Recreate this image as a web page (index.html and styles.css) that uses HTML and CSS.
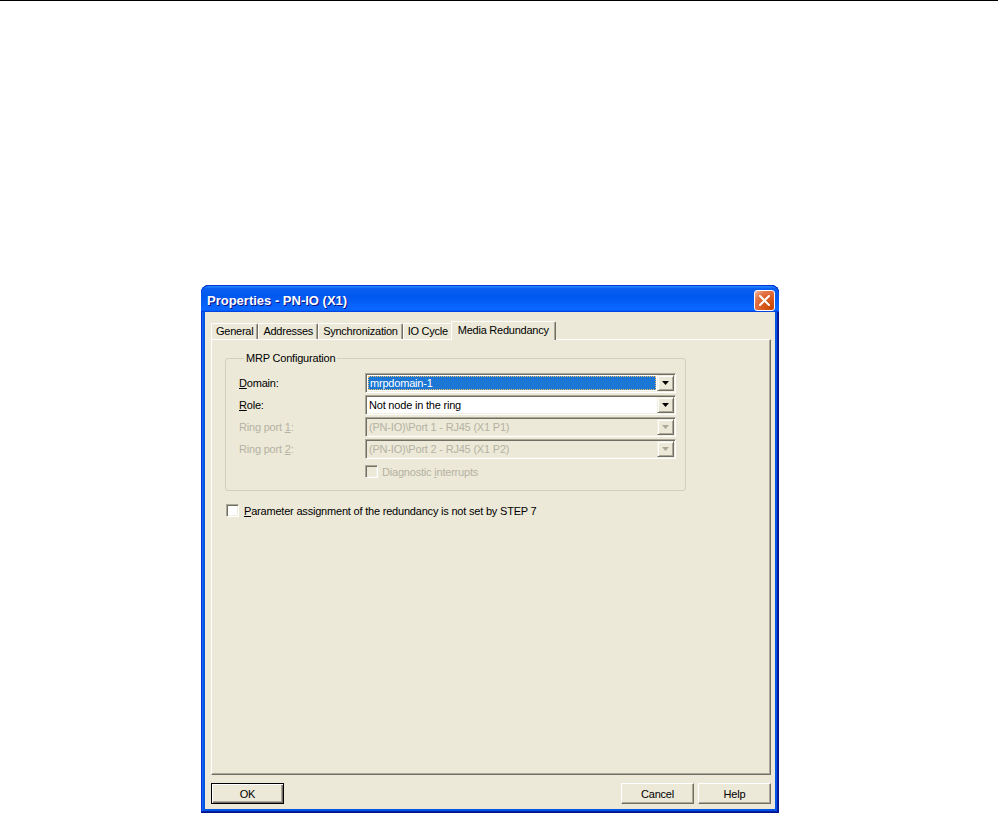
FILE: index.html
```html
<!DOCTYPE html>
<html>
<head>
<meta charset="utf-8">
<title>Properties - PN-IO (X1)</title>
<link rel="stylesheet" href="styles.css">
</head>
<body>
<div class="topline"></div>
<div class="window">
  <div class="titlebar">
    <span class="title">Properties - PN-IO (X1)</span>
    <span class="close"><svg width="11" height="11" viewBox="0 0 11 11"><path d="M1 1L10 10M10 1L1 10" stroke="#fff" stroke-width="2" stroke-linecap="square" fill="none"/></svg></span>
  </div>
  <div class="client">
    <div class="tabs">
      <div class="tab">General</div>
      <div class="tab">Addresses</div>
      <div class="tab">Synchronization</div>
      <div class="tab">IO Cycle</div>
      <div class="tab active">Media Redundancy</div>
    </div>
    <div class="pane">
      <fieldset class="group">
        <legend>MRP Configuration</legend>
        <div class="row">
          <span class="label"><u>D</u>omain:</span>
          <div class="combo">
            <span class="value selected"><span class="focusrect">mrpdomain-1</span></span>
            <span class="drop"><svg width="7" height="4" viewBox="0 0 7 4"><path d="M0 0H7L3.5 4Z" fill="#000"/></svg></span>
          </div>
        </div>
        <div class="row">
          <span class="label"><u>R</u>ole:</span>
          <div class="combo">
            <span class="value">Not node in the ring</span>
            <span class="drop"><svg width="7" height="4" viewBox="0 0 7 4"><path d="M0 0H7L3.5 4Z" fill="#000"/></svg></span>
          </div>
        </div>
        <div class="row">
          <span class="label disabled">Ring port <u>1</u>:</span>
          <div class="combo off">
            <span class="value">(PN-IO)\Port 1 - RJ45 (X1 P1)</span>
            <span class="drop"><svg width="7" height="4" viewBox="0 0 7 4"><path d="M0 0H7L3.5 4Z" fill="#ACA899"/></svg></span>
          </div>
        </div>
        <div class="row">
          <span class="label disabled">Ring port <u>2</u>:</span>
          <div class="combo off">
            <span class="value">(PN-IO)\Port 2 - RJ45 (X1 P2)</span>
            <span class="drop"><svg width="7" height="4" viewBox="0 0 7 4"><path d="M0 0H7L3.5 4Z" fill="#ACA899"/></svg></span>
          </div>
        </div>
        <div class="row checkrow">
          <span class="label"></span>
          <span class="cb off"></span>
          <span class="cbtext disabled">Diagnostic <u>i</u>nterrupts</span>
        </div>
      </fieldset>
      <div class="paramrow">
        <span class="cb"></span>
        <span class="cbtext"><u>P</u>arameter assignment of the redundancy is not set by STEP 7</span>
      </div>
    </div>
    <div class="buttons">
      <span class="btn default">OK</span>
      <span class="spacer"></span>
      <span class="btn">Cancel</span>
      <span class="btn">Help</span>
    </div>
  </div>
</div>
</body>
</html>
```
FILE: styles.css
```css
* { box-sizing: border-box; }
body {
  margin: 0;
  background: #fff;
  font-family: "Liberation Sans", Arial, sans-serif;
  font-size: 11px;
  letter-spacing: -0.2px;
  color: #000;
}
.topline { height: 1px; background: #000; }

.window {
  width: 578px;
  height: 528px;
  margin: 284px 0 0 201px;
  background: #0054e3;
  border-radius: 8px 8px 0 0;
  display: flex;
  flex-direction: column;
  padding: 0 4px 4px;
  box-shadow: inset -1px -1px #00138c, inset 1px 1px #0831d9, inset -2px -2px #001ea0, inset 2px 2px #166aee;
}
.titlebar {
  height: 27px;
  margin: 0 -4px;
  padding: 0 4px 0 6px;
  border-radius: 8px 8px 0 0;
  background: linear-gradient(180deg, #2a8dff, #0a5ff0 10%, #0058ee 40%, #0a66ff 85%, #0a66ff 92%, #005bff 95%, #0045e0 97%, #0045e0);
  border-top: 1px solid #0831d9;
  display: flex;
  align-items: center;
}
.title {
  flex: 1;
  color: #fff;
  font-weight: bold;
  font-size: 13px;
  letter-spacing: 0;
  padding-top: 3px;
  text-shadow: 1px 1px #0f1089;
}
.close {
  width: 21px;
  height: 21px;
  margin-top: 2px;
  border: 1px solid #fff;
  border-radius: 3px;
  background: radial-gradient(circle at 85% 85%, #c84700 0, #dc5d25 45%, #e3744a 70%, #f5b49a 95%);
  display: flex;
  align-items: center;
  justify-content: center;
}

.client {
  flex: 1;
  background: #ece9d8;
  padding: 9px 4px 0 6px;
  display: flex;
  flex-direction: column;
}
.tabs {
  display: flex;
  align-items: flex-end;
  height: 18px;
  position: relative;
  z-index: 1;
}
.tab {
  height: 16px;
  padding: 0 4px;
  letter-spacing: -0.25px;
  border-top: 1px solid #fff;
  border-left: 1px solid #fff;
  border-right: 1px solid #716f64;
  box-shadow: inset -1px 0 #aca899;
  border-radius: 2px 2px 0 0;
  line-height: 15px;
  white-space: nowrap;
}
.tab.active {
  height: 19px;
  margin: 0 -2px -1px;
  padding: 0 6px;
  line-height: 16px;
  background: #ece9d8;
  position: relative;
}

.pane {
  width: 560px;
  height: 436px;
  border-top: 1px solid #fff;
  border-left: 1px solid #fff;
  border-right: 1px solid #716f64;
  border-bottom: 1px solid #716f64;
  box-shadow: inset -1px -1px #aca899;
  padding: 12px 0 0 13px;
}

.group {
  width: 461px;
  margin: 0;
  padding: 8px 9px 12px 13px;
  border: 1px solid #d0d0bf;
  border-radius: 3px;
}
.group legend {
  padding: 0 2px;
  margin-left: 5px;
  line-height: 13px;
}
.row {
  display: flex;
  align-items: center;
  height: 20px;
  margin-bottom: 2px;
}
.label {
  width: 126px;
  flex: none;
}
.disabled { color: #b5b2a3; }
.combo {
  flex: 1;
  height: 20px;
  display: flex;
  background: #fff;
  border-top: 1px solid #aca899;
  border-left: 1px solid #aca899;
  border-right: 1px solid #fff;
  border-bottom: 1px solid #fff;
  box-shadow: inset 1px 1px #716f64, inset -1px -1px #f1efe2;
  padding: 2px;
}
.combo.off { background: #ece9d8; color: #b5b2a3; }
.value {
  flex: 1;
  display: flex;
  align-items: center;
  padding-left: 1px;
  white-space: nowrap;
}
.value.selected {
  background: #1c76d4;
  color: #fff;
  margin-right: 1px;
  padding: 0;
}
.focusrect {
  flex: 1;
  height: 100%;
  border: 1px dotted #f7c06a;
  display: flex;
  align-items: center;
  padding-left: 1px;
}
.drop {
  width: 17px;
  margin: -1px -1px -1px 0;
  flex: none;
  background: #ece9d8;
  border-top: 1px solid #f1efe2;
  border-left: 1px solid #f1efe2;
  border-right: 1px solid #716f64;
  border-bottom: 1px solid #716f64;
  box-shadow: inset 1px 1px #fff, inset -1px -1px #aca899;
  display: flex;
  align-items: center;
  justify-content: center;
}
.checkrow { margin-top: 6px; height: 13px; margin-bottom: 0; }
.cb {
  width: 13px;
  height: 13px;
  flex: none;
  background: #fff;
  border-top: 1px solid #aca899;
  border-left: 1px solid #aca899;
  border-right: 1px solid #fff;
  border-bottom: 1px solid #fff;
  box-shadow: inset 1px 1px #716f64, inset -1px -1px #f1efe2;
}
.cb.off { background: #ece9d8; }
.cbtext { margin-left: 4px; white-space: nowrap; }

.paramrow {
  display: flex;
  align-items: center;
  height: 13px;
  margin: 13px 0 0 1px;
}
.paramrow .cbtext { margin-left: 5px; }

.buttons {
  display: flex;
  margin-top: 8px;
  gap: 4px;
}
.spacer { flex: 1; }
.btn {
  width: 73px;
  height: 21px;
  display: flex;
  align-items: center;
  justify-content: center;
  background: #ece9d8;
  border-top: 1px solid #fff;
  border-left: 1px solid #fff;
  border-right: 1px solid #716f64;
  border-bottom: 1px solid #716f64;
  box-shadow: inset -1px -1px #aca899;
}
.btn.default {
  border: 1px solid #000;
  box-shadow: inset 1px 1px #fff, inset -1px -1px #716f64, inset -2px -2px #aca899;
}
```
